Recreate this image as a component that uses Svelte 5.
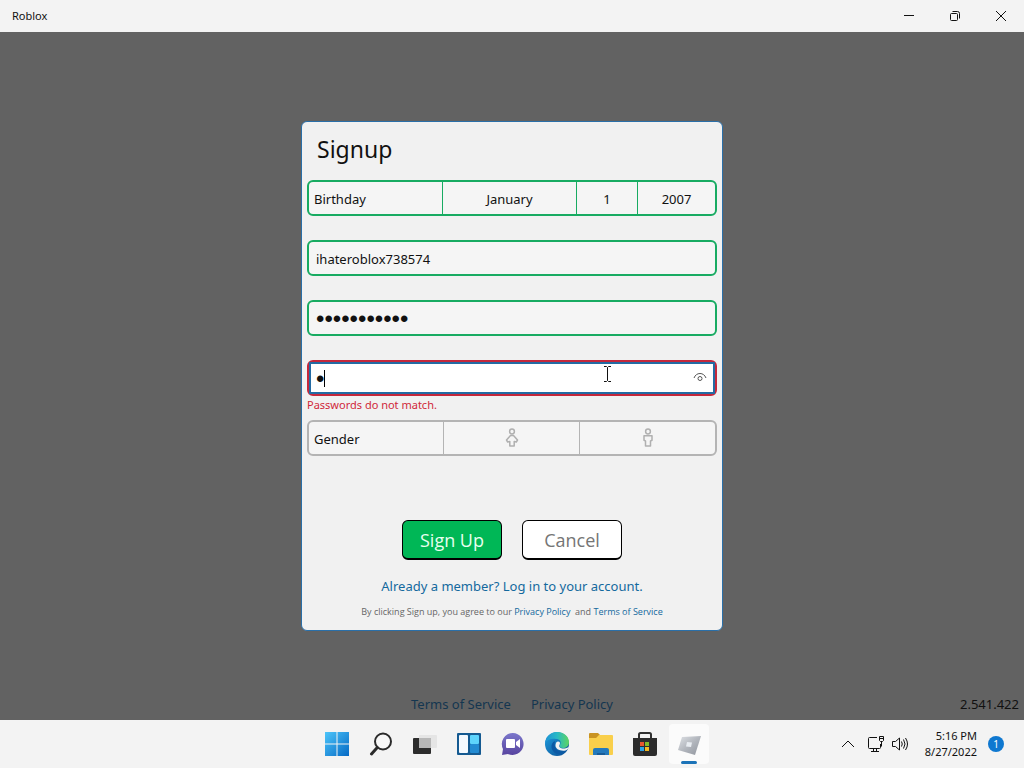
<script lang="ts">
type Gender = "female" | "male";

const months = [
	"January",
	"February",
	"March",
	"April",
	"May",
	"June",
	"July",
	"August",
	"September",
	"October",
	"November",
	"December"
];
const days = Array.from({ length: 31 }, (_, i) => i + 1);
const years = Array.from({ length: 100 }, (_, i) => 2022 - i);

let month = $state("January");
let day = $state(1);
let year = $state(2007);
let username = $state("ihateroblox738574");
let password = $state("robloxisbad");
let confirmation = $state("r");
let revealed = $state(false);
let gender = $state<Gender | null>(null);

let mismatch = $derived(confirmation !== password);
</script>

<div class="desktop">
	<header class="titlebar">
		<span class="app-name">Roblox</span>
		<div class="window-controls">
			<button type="button" aria-label="Minimize">
				<svg width="12" height="12" viewBox="0 0 12 12"><path d="M1 5.5h10" /></svg>
			</button>
			<button type="button" aria-label="Restore">
				<svg width="12" height="12" viewBox="0 0 12 12">
					<rect x="1.5" y="3.5" width="7" height="7" rx="1" />
					<path d="M3.5 1.5h5a2 2 0 0 1 2 2v5" />
				</svg>
			</button>
			<button type="button" aria-label="Close">
				<svg width="12" height="12" viewBox="0 0 12 12"><path d="M1 1l10 10M11 1L1 11" /></svg>
			</button>
		</div>
	</header>

	<main class="stage">
		<form class="dialog" onsubmit={(event) => event.preventDefault()}>
			<h1>Signup</h1>

			<div class="row valid birthday" role="group" aria-labelledby="birthday-label">
				<span class="row-label" id="birthday-label">Birthday</span>
				<select aria-label="Month" bind:value={month}>
					{#each months as name}
						<option value={name}>{name}</option>
					{/each}
				</select>
				<select aria-label="Day" bind:value={day}>
					{#each days as value}
						<option {value}>{value}</option>
					{/each}
				</select>
				<select aria-label="Year" bind:value={year}>
					{#each years as value}
						<option {value}>{value}</option>
					{/each}
				</select>
			</div>

			<div class="row valid">
				<input type="text" aria-label="Username" bind:value={username} />
			</div>

			<div class="row valid">
				<input type="password" aria-label="Password" bind:value={password} />
			</div>

			<div class="row confirm" class:invalid={mismatch} class:valid={!mismatch}>
				<input
					type={revealed ? "text" : "password"}
					aria-label="Confirm password"
					aria-describedby="confirm-error"
					bind:value={confirmation}
				/>
				<span class="caret"></span>
				<svg class="ibeam" width="9" height="18" viewBox="0 0 9 18">
					<path d="M1 1.5h2.500l1 1 1-1H8M4.500 2.500v13M1 16.500h2.500l1-1 1 1H8" />
				</svg>
				<button
					type="button"
					class="reveal"
					aria-label="Show password"
					onclick={() => (revealed = !revealed)}
				>
					<svg width="14" height="10" viewBox="0 0 14 10">
						<path d="M1 6C2.200 3 4.300 1.500 7 1.500S11.800 3 13 6" />
						<circle cx="7" cy="6.500" r="2" />
					</svg>
				</button>
			</div>
			<p class="error" id="confirm-error">{mismatch ? "Passwords do not match." : ""}</p>

			<div class="row gender" role="group" aria-labelledby="gender-label">
				<span class="row-label" id="gender-label">Gender</span>
				<button
					type="button"
					aria-label="Female"
					aria-pressed={gender === "female"}
					onclick={() => (gender = "female")}
				>
					<svg width="14" height="20" viewBox="0 0 14 20">
						<circle cx="7" cy="3.500" r="2.400" />
						<path d="M5.500 7.500h3l4 4.500-1.200 2-2.100-.5v4.500H4.800v-4.500l-2.100.5-1.200-2z" />
					</svg>
				</button>
				<button
					type="button"
					aria-label="Male"
					aria-pressed={gender === "male"}
					onclick={() => (gender = "male")}
				>
					<svg width="14" height="20" viewBox="0 0 14 20">
						<circle cx="7" cy="3.500" r="2.400" />
						<path d="M3 7.800h8v4.500L9.500 13v5h-5v-5L3 12.300z" />
					</svg>
				</button>
			</div>

			<div class="actions">
				<button type="submit" class="primary">Sign Up</button>
				<button type="button">Cancel</button>
			</div>

			<a class="login" href="#login">Already a member? Log in to your account.</a>
			<p class="legal">
				By clicking Sign up, you agree to our <a href="#privacy">Privacy Policy</a>&nbsp; and
				<a href="#terms">Terms of Service</a>
			</p>
		</form>

		<footer class="page-footer">
			<nav>
				<a href="#terms">Terms of Service</a>
				<a href="#privacy">Privacy Policy</a>
			</nav>
			<span class="version">2.541.422</span>
		</footer>
	</main>

	<div class="taskbar">
		<div class="apps">
			<button type="button" aria-label="Start">
				<svg width="24" height="24" viewBox="0 0 24 24">
					<defs>
						<linearGradient id="start" x1="0" y1="0" x2="1" y2="1">
							<stop offset="0" stop-color="#4cc5fa" />
							<stop offset="1" stop-color="#0669c4" />
						</linearGradient>
					</defs>
					<path fill="url(#start)" d="M0 0h11.500v11.500H0zM12.500 0H24v11.500H12.500zM0 12.500h11.500V24H0zM12.500 12.500H24V24H12.500z" />
				</svg>
			</button>
			<button type="button" aria-label="Search">
				<svg width="24" height="24" viewBox="0 0 24 24" fill="none" stroke="#2a2a2a">
					<circle cx="14" cy="9.500" r="8" fill="#f7f7f7" stroke-width="2" />
					<path d="M8.300 15.500L2.500 22" stroke-width="3" stroke-linecap="round" />
				</svg>
			</button>
			<button type="button" aria-label="Task View">
				<svg width="24" height="24" viewBox="0 0 24 24">
					<rect x="0" y="6" width="18" height="16" rx="1" fill="#2c2c2c" />
					<rect x="6" y="3" width="18" height="13" rx="1" fill="#e5e5e5" />
					<path d="M6 6h12v10H6z" fill="#b7b7b7" />
				</svg>
			</button>
			<button type="button" aria-label="Widgets">
				<svg width="24" height="24" viewBox="0 0 24 24">
					<rect x="0" y="1" width="24" height="22" rx="1" fill="#155a91" />
					<rect x="2" y="3" width="9" height="18" rx="1" fill="#f5faff" />
					<rect x="13" y="3" width="9" height="9" rx="1" fill="#5ed4fc" />
					<rect x="13" y="12" width="9" height="9" rx="1" fill="#238bd2" />
				</svg>
			</button>
			<button type="button" aria-label="Chat">
				<svg width="24" height="24" viewBox="0 0 24 24">
					<defs>
						<linearGradient id="chat" x1="0" y1="0" x2="0" y2="1">
							<stop offset="0" stop-color="#7b77cb" />
							<stop offset="1" stop-color="#57449f" />
						</linearGradient>
					</defs>
					<path fill="url(#chat)" d="M12 1a11 11 0 1 1-5 21L1 23l1-6A11 11 0 0 1 12 1z" />
					<rect x="5" y="7" width="9" height="9" rx="1" fill="#fff" />
					<path fill="#fff" d="M15 10l4-3v9l-4-3z" />
				</svg>
			</button>
			<button type="button" aria-label="Edge">
				<svg width="24" height="24" viewBox="0 0 24 24">
					<defs>
						<linearGradient id="edge-top" x1="0" y1="0" x2="1" y2="0">
							<stop offset="0" stop-color="#1f91d5" />
							<stop offset=".5" stop-color="#27b9c6" />
							<stop offset="1" stop-color="#5fd560" />
						</linearGradient>
						<linearGradient id="edge-base" x1="0" y1="0" x2="1" y2="1">
							<stop offset="0" stop-color="#1e9fe0" />
							<stop offset="1" stop-color="#0b4b91" />
						</linearGradient>
					</defs>
					<circle cx="12" cy="12" r="12" fill="url(#edge-base)" />
					<path fill="url(#edge-top)" d="M0 11C1 4 6 0 12 0c7 0 12 4.600 12 10 0 4-3 6-6 6s-4-1-3-3c2-4-1-6-4-6C6 6 2 8 0 11z" />
					<path fill="#0c59a4" d="M10 9c-5 2-5 10 2 13 4 1 7-1 9-3-6 2-13-1-11-10z" />
					<path fill="#f3f3f3" d="M14.500 13c-1 2 1 3.500 4 3.500 2 0 4-.5 5.500-2-.5 2.500-2 3.500-3.500 4-5 1-10.500-1.500-10-5.500 .2-2.500 1.400-3.500 2.500-3.500 2 0 2.500 1.500 1.500 3.500z" />
				</svg>
			</button>
			<button type="button" aria-label="File Explorer">
				<svg width="26" height="24" viewBox="0 0 26 24">
					<path fill="#c99323" d="M1 2a1 1 0 0 1 1-1h8l2 2-2 3H1z" />
					<path fill="#f9cf4b" d="M1 6h7l3-3h13a1 1 0 0 1 1 1v18a1 1 0 0 1-1 1H2a1 1 0 0 1-1-1z" />
					<path fill="#2379bc" d="M7 16h12a2 2 0 0 1 2 2v5H5v-5a2 2 0 0 1 2-2z" />
					<path fill="#195c98" d="M9 21h8v2H9z" />
				</svg>
			</button>
			<button type="button" aria-label="Microsoft Store">
				<svg width="24" height="26" viewBox="0 0 24 26">
					<path d="M6 9V3.500A1.500 1.500 0 0 1 7.500 2h9A1.500 1.500 0 0 1 18 3.500V9" fill="none" stroke="#303030" stroke-width="2" />
					<path fill="#2c2c2c" d="M0 7h24v16a2 2 0 0 1-2 2H2a2 2 0 0 1-2-2z" />
					<path fill="#e8562e" d="M7 11h4v4H7z" />
					<path fill="#7fba28" d="M12 11h4v4h-4z" />
					<path fill="#2aa1e4" d="M7 16h4v4H7z" />
					<path fill="#f5b921" d="M12 16h4v4h-4z" />
				</svg>
			</button>
			<button type="button" class="running" aria-label="Roblox">
				<svg width="26" height="24" viewBox="0 0 26 24">
					<defs>
						<linearGradient id="tile" x1="0" y1="0" x2="1" y2="1">
							<stop offset="0" stop-color="#dfe2e6" />
							<stop offset=".5" stop-color="#b2b6bd" />
							<stop offset="1" stop-color="#90959e" />
						</linearGradient>
					</defs>
					<path fill="url(#tile)" d="M6 5l19-1-6 19-17-5z" />
					<path fill="#e9edf2" d="M11 10l5 .5-1 4.500-5-.5z" />
				</svg>
			</button>
		</div>

		<div class="tray">
			<button type="button" class="chevron" aria-label="Show hidden icons">
				<svg width="14" height="8" viewBox="0 0 14 8"><path d="M1 7l6-6 6 6" /></svg>
			</button>
			<button type="button" class="status" aria-label="Network and volume">
				<svg width="18" height="18" viewBox="0 0 18 18">
					<path d="M10 2.500H2.500a1 1 0 0 0-1 1v9a1 1 0 0 0 1 1h10a1 1 0 0 0 1-1V9M6.500 13.500v3M9.500 13.500v3M4 16.500h8" />
					<path d="M12.500 1.500h4v4l-1 1h-2l-1-1zM12.500 3.500h4M14.500 6.500v5" />
				</svg>
				<svg width="18" height="16" viewBox="0 0 18 16">
					<path d="M1.500 5.500h3l4-3.500v12l-4-3.500h-3z" />
					<path d="M10.500 5.500q1.500 2.500 0 5M12.500 3.500q3 4.500 0 9M14.500 2q4 6 0 12" />
				</svg>
			</button>
			<button type="button" class="clock">
				<time>5:16 PM</time>
				<time datetime="2022-08-27">8/27/2022</time>
			</button>
			<button type="button" class="badge" aria-label="1 notification">1</button>
		</div>
	</div>
</div>

<style>
:global(body) {
	margin: 0;
}
.desktop {
	display: flex;
	flex-direction: column;
	min-height: 100vh;
	background: #626262;
	color: #111;
	font-family: "Noto Sans", "Open Sans", sans-serif;
	font-size: 13px;
}
button,
input,
select {
	margin: 0;
	padding: 0;
	border: none;
	border-radius: 0;
	background: none;
	color: inherit;
	font: inherit;
	outline: none;
}
button {
	cursor: pointer;
}
a {
	color: #14699e;
	text-decoration: none;
}
svg {
	display: block;
}

.titlebar {
	display: flex;
	align-items: center;
	justify-content: space-between;
	height: 32px;
	padding-left: 12px;
	background: #f3f3f3;
}
.app-name {
	padding-bottom: 2px;
	font-size: 11px;
}
.window-controls {
	display: flex;
	height: 100%;
}
.window-controls button {
	display: flex;
	align-items: center;
	justify-content: center;
	width: 46px;
}
.window-controls svg,
.tray svg {
	fill: none;
	stroke: #111;
}

.stage {
	flex: 1;
	display: grid;
	grid-template-rows: 1fr auto 1fr;
	justify-items: center;
}
.dialog {
	grid-row: 2;
	box-sizing: border-box;
	display: flex;
	flex-direction: column;
	width: 422px;
	max-width: 100%;
	padding: 0 5px 11px;
	border: 1px solid #2a6fa8;
	border-radius: 6px;
	background: #f1f1f1;
}
h1 {
	margin: 11px 10px 15px;
	font-size: 23px;
	font-weight: 400;
	line-height: 32px;
}
.row {
	position: relative;
	box-sizing: border-box;
	display: flex;
	height: 36px;
	margin-bottom: 24px;
	border: 2px solid #b4b4b4;
	border-radius: 6px;
	background: #f5f5f5;
}
.row.valid {
	border-color: #18ab62;
}
.row.invalid {
	border-color: #c4283c;
}
.row input {
	flex: 1;
	min-width: 0;
	padding: 2px 7px 0;
}
.row input[type="password"] {
	font-family: "Liberation Sans", sans-serif;
	font-size: 24px;
}
.row-label {
	flex: 1;
	padding-left: 5px;
	line-height: 34px;
}
.birthday select {
	padding-top: 2px;
	appearance: none;
	border-left: 1px solid #18ab62;
	text-align: center;
	text-align-last: center;
}
.birthday select:nth-of-type(1) {
	width: 134px;
}
.birthday select:nth-of-type(2) {
	width: 61px;
}
.birthday select:nth-of-type(3) {
	width: 78px;
}
.row.confirm {
	margin-bottom: 0;
	background: #fff;
}
.row.confirm input {
	padding: 2px 32px 0 5px;
	border: 2px solid #246ba3;
}
.caret {
	position: absolute;
	top: 8px;
	left: 15px;
	width: 1px;
	height: 17px;
	background: #000;
}
.ibeam {
	position: absolute;
	top: 3px;
	left: 294px;
	fill: none;
	stroke: #111;
	pointer-events: none;
}
.reveal {
	position: absolute;
	top: 10px;
	right: 8px;
}
.reveal svg {
	fill: none;
	stroke: #555;
}
.error {
	height: 24px;
	margin: 0;
	color: #d0283a;
	font-size: 11px;
	line-height: 18px;
}
.gender button {
	display: flex;
	align-items: center;
	justify-content: center;
	box-sizing: border-box;
	width: 136px;
	border-left: 1px solid #b4b4b4;
}
.gender svg {
	fill: none;
	stroke: #b0b0b0;
	stroke-width: 1.5;
	stroke-linejoin: round;
}
.gender button[aria-pressed="true"] svg {
	stroke: #14699e;
}
.actions {
	display: flex;
	justify-content: center;
	gap: 20px;
	margin-top: 40px;
}
.actions button {
	width: 100px;
	height: 40px;
	border: 1px solid #000;
	border-bottom-width: 2px;
	border-radius: 6px;
	background: #fff;
	color: #757575;
	font-family: "Open Sans", sans-serif;
	font-size: 18px;
}
.actions .primary {
	background: #00b756;
	color: #e8ffef;
}
.login {
	margin-top: 16px;
	line-height: 20px;
	text-align: center;
}
.legal {
	margin: 8px 0 0;
	color: #666;
	font-family: "Open Sans", sans-serif;
	font-size: 9px;
	line-height: 15px;
	text-align: center;
}

.page-footer {
	grid-row: 3;
	align-self: end;
	display: grid;
	grid-template-columns: 1fr auto 1fr;
	align-items: center;
	width: 100%;
	height: 32px;
}
.page-footer nav {
	grid-column: 2;
	display: flex;
	gap: 20px;
}
.page-footer a {
	color: #143650;
}
.version {
	justify-self: end;
	padding-right: 5px;
}

.taskbar {
	display: grid;
	grid-template-columns: 1fr auto 1fr;
	align-items: center;
	height: 48px;
	background: #f3f3f3;
}
.apps {
	grid-column: 2;
	display: flex;
	gap: 4px;
	padding-left: 2px;
}
.apps button {
	position: relative;
	display: flex;
	align-items: center;
	justify-content: center;
	width: 40px;
	height: 40px;
	border-radius: 4px;
}
.apps .running {
	background: #fbfbfb;
}
.running::after {
	content: "";
	position: absolute;
	bottom: 0;
	left: 12px;
	width: 16px;
	height: 3px;
	border-radius: 2px;
	background: #1b73b8;
}
.tray {
	display: flex;
	align-items: center;
	justify-content: flex-end;
	padding-right: 20px;
}
.chevron {
	margin-right: 12px;
}
.status {
	display: flex;
	align-items: center;
	gap: 6px;
	margin-right: 16px;
}
.clock {
	display: flex;
	flex-direction: column;
	margin-right: 11px;
	font-size: 11px;
	line-height: 16px;
	text-align: right;
}
.badge {
	width: 16px;
	height: 16px;
	border-radius: 50%;
	background: #0f78d0;
	color: #fff;
	font-size: 10px;
	line-height: 16px;
}
</style>
